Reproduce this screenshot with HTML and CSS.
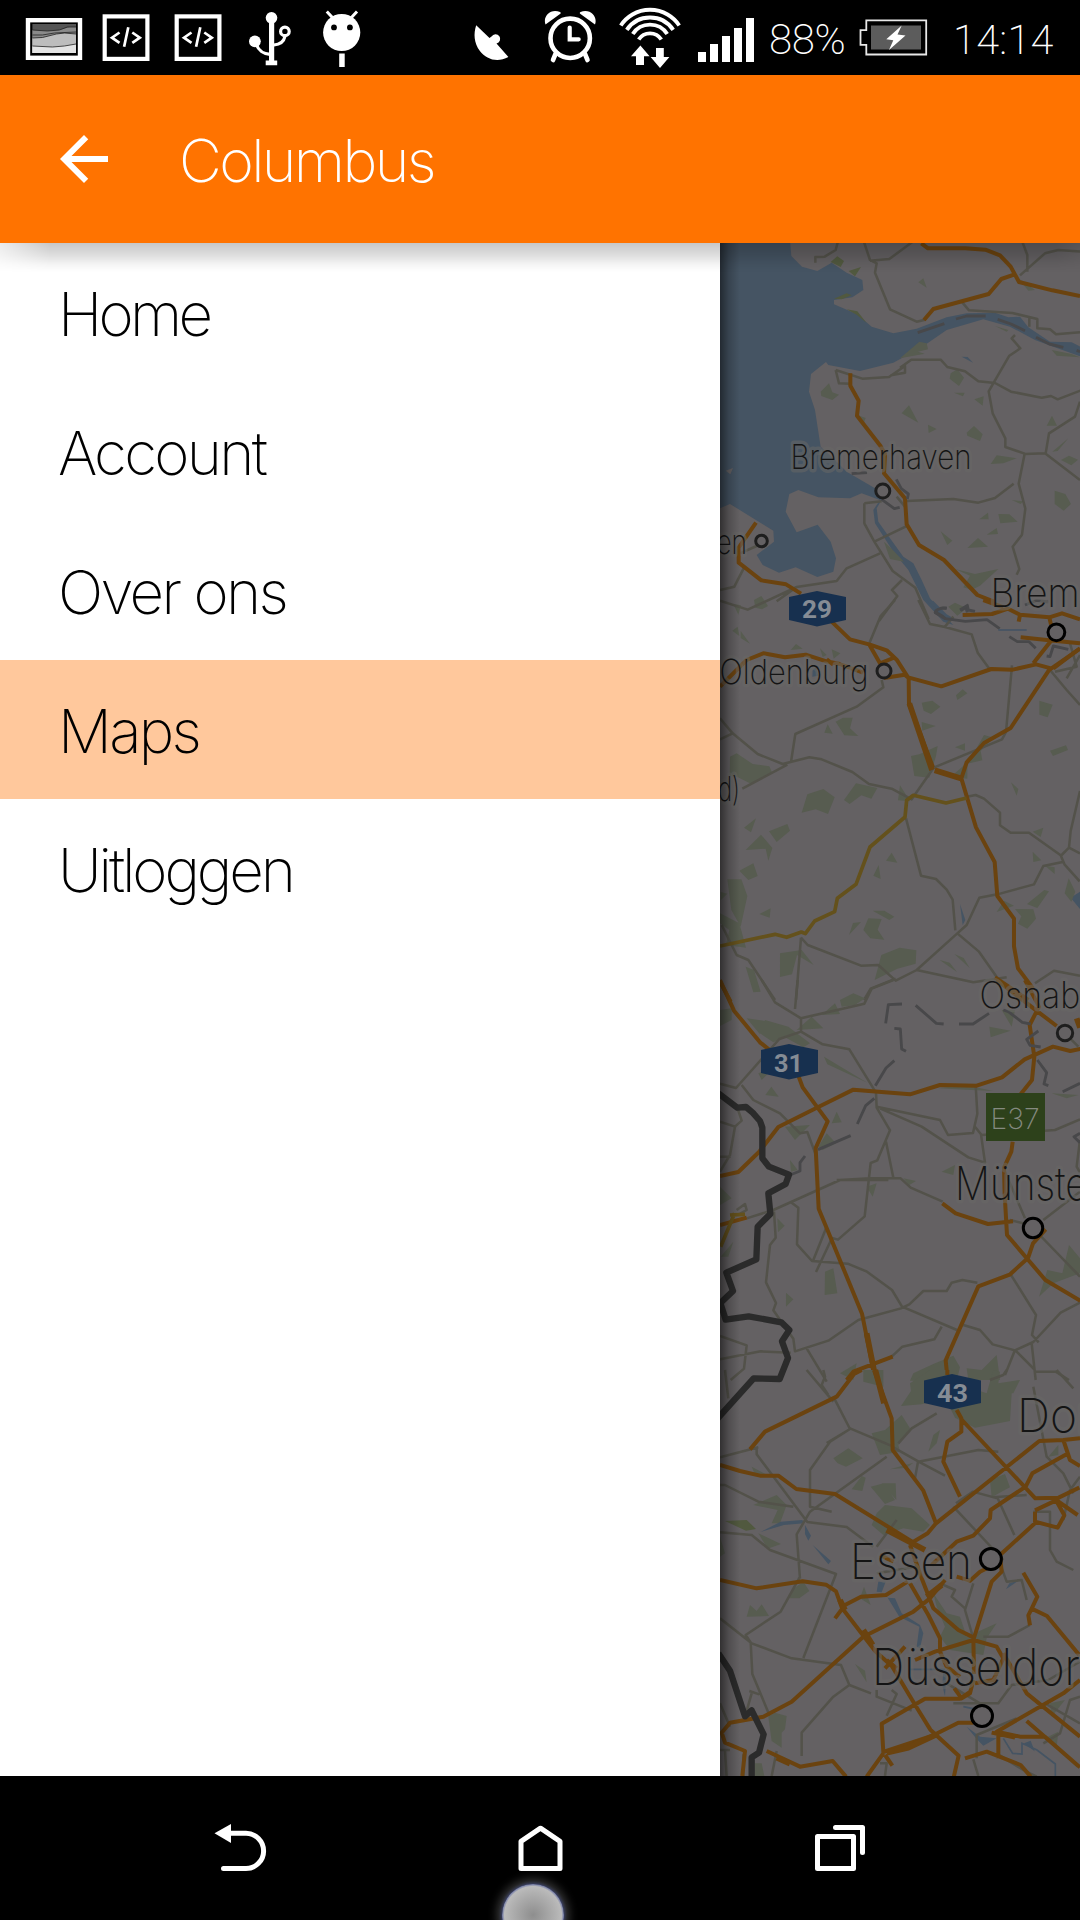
FILE: index.html
```html
<!DOCTYPE html>
<html lang="nl">
<head>
<meta charset="utf-8">
<title>Columbus</title>
<link rel="stylesheet" href="styles.css">
</head>
<body>
<div class="phone">
  <div class="status">
    <svg class="ic-picture" width="58" height="75" viewBox="25 0 58 75">
      <rect x="28" y="20.2" width="52" height="37.6" fill="#000" stroke="#fff" stroke-width="4.4"/>
      <rect x="32.4" y="24" width="43.6" height="29" fill="#555"/>
      <path d="M32.4 30l15 1 12-1 10-3h6.600V53H32.400z" fill="#8a8a8a"/>
      <path d="M32.400 38l9 0 14-4 10-1 10.600 1V53H32.400z" fill="#bdbdbd"/>
      <path d="M32.400 46l20 1 12-1 11.600-2V53H32.400z" fill="#e4e4e4"/>
      <path d="M32.400 30l15 1 12-1 8-3 8.600 0M32.400 35l10 0 12-2 21.600-1M32.400 38l10-.500 14-3.500 8-1 11.600 1M32.400 46l20 1 12-1 11.600-2" fill="none" stroke="#222" stroke-width=".8"/>
    </svg>
    <svg class="ic-code" width="48" height="75" viewBox="102 0 48 75">
      <rect x="104.700" y="16.400" width="42.700" height="42.500" fill="none" stroke="#fff" stroke-width="4.200"/>
      <path d="M119.500 32.500l-7.500 5.200 7.500 5.200M132.300 32.500l7.500 5.200-7.500 5.200M128.300 27.300l-4.200 19.400" fill="none" stroke="#fff" stroke-width="2.700"/>
    </svg>
    <svg class="ic-code" width="48" height="75" viewBox="102 0 48 75">
      <rect x="104.700" y="16.400" width="42.700" height="42.500" fill="none" stroke="#fff" stroke-width="4.200"/>
      <path d="M119.500 32.500l-7.500 5.200 7.500 5.200M132.300 32.500l7.500 5.200-7.500 5.200M128.300 27.300l-4.200 19.400" fill="none" stroke="#fff" stroke-width="2.700"/>
    </svg>
    <svg class="ic-usb" width="44" height="75" viewBox="248 0 44 75">
      <path d="M269 18h5.200v42.500h3v4.700h-11.500v-4.700h3.300z" fill="#fff"/>
      <circle cx="271.500" cy="17.800" r="5.800" fill="#fff"/>
      <circle cx="254.900" cy="41.300" r="5.900" fill="#fff"/>
      <circle cx="284.900" cy="31.400" r="4.300" fill="none" stroke="#fff" stroke-width="3.200"/>
      <path d="M256.500 45c2 5 7 9 13.500 9.300M284.900 36.500c-1 5-5.500 8-11 8.500" fill="none" stroke="#fff" stroke-width="3.200"/>
    </svg>
    <svg class="ic-droid" width="40" height="75" viewBox="322 0 40 75">
      <circle cx="341.700" cy="32.500" r="18.600" fill="#fff"/>
      <path d="M326.800 11.500l6.500 7M357 11.500l-6.500 7" stroke="#fff" stroke-width="3"/>
      <circle cx="334" cy="27.400" r="2.900"/><circle cx="349.900" cy="27.400" r="2.900"/>
      <rect x="339.200" y="53.500" width="5.500" height="13.500" fill="#fff"/>
    </svg>
    <svg class="ic-dish" width="36" height="75" viewBox="473 0 36 75">
      <path d="M476.200 25.300L489.500 38l2-1.500a4.700 4.700 0 1 1 5 7L508.400 57c-11 6-22 2.500-28.500-6-6-8-6.500-17-3.700-25.700z" fill="#fff"/>
    </svg>
    <svg class="ic-alarm" width="54" height="75" viewBox="543 0 54 75">
      <g fill="none" stroke="#fff" stroke-width="4.600" stroke-linecap="round">
        <circle cx="570.200" cy="38.300" r="19.700"/>
        <path d="M555.500 54l-2.500 6M585 54l2.500 6"/>
        <path d="M569.700 27.500v11.800h9" stroke-width="4.200"/>
      </g>
      <path d="M545.500 24.500c-3-8 5-16.500 14.500-12.500 1 .5 1 1.500 0 2z" fill="#fff"/>
      <path d="M595 24.500c3-8-5-16.500-14.500-12.500-1 .5-1 1.500 0 2z" fill="#fff"/>
    </svg>
    <svg class="ic-wifi" width="64" height="75" viewBox="618 0 64 75">
      <g fill="none" stroke="#fff" stroke-width="3.900">
        <path d="M620.800 25.500a35 35 0 0 1 58.400 0"/><path d="M626.800 29.800a28 28 0 0 1 46.400 0"/>
        <path d="M632.800 34a20.500 20.500 0 0 1 34.400 0"/><path d="M638.700 39.500a13.500 13.500 0 0 1 22.600 0"/>
      </g>
      <path d="M640.400 45.500l9.200 10.700H644V65h-8v-8.800h-5zM656 48h7.800v9h5.600L660 68l-9.400-11h5.400z" fill="#fff"/>
    </svg>
    <svg class="ic-signal" width="56" height="75" viewBox="698 0 56 75">
      <path d="M698 52h8v10h-8zM710 44h8v18h-8zM722 36h8v26h-8zM734 28h8v34h-8zM746 18h8v44h-8z" fill="#fff"/>
    </svg>
    <span class="percent">88%</span>
    <svg class="ic-battery" width="69" height="75" viewBox="859 0 69 75">
      <path d="M866.300 20.300h59.900v34.200h-59.900v-9.700h-5.800V30.200h5.800z" fill="none" stroke="#e8e8e8" stroke-width="1.800"/>
      <rect x="871" y="25.500" width="50" height="24" fill="#5c5c5c"/>
      <path d="M901.700 25.500l-15.400 13.700 7 1-4.300 9.800 16.500-14.500-8-1z" fill="#fff"/>
    </svg>
    <span class="clock">14:14</span>
  </div>

  <header class="appbar">
    <svg class="back" width="72" height="72" viewBox="0 0 24 24"><path d="M20 11H7.830l5.590-5.590L12 4l-8 8 8 8 1.410-1.410L7.830 13H20v-2z" fill="#fff"/></svg>
    <h1 class="title">Columbus</h1>
  </header>

  <main class="content">
    <nav class="drawer">
      <a class="item"><span class="tighter">Home</span></a>
      <a class="item"><span>Account</span></a>
      <a class="item"><span>Over ons</span></a>
      <a class="item active"><span>Maps</span></a>
      <a class="item"><span class="tight">Uitloggen</span></a>
    </nav>
    <div class="mapwrap">
    <svg class="map" width="360" height="1533" viewBox="720 243 360 1533">
      <rect x="720" y="243" width="360" height="1533" fill="#646163"/>

      <!-- North Sea coast and Bremen -->
      <g transform="translate(700 240) scale(.333333)">
        <path class="water" d="M0 0H270L274 48 306 80 352 93 395 68 440 98 487 120 490 150 457 172 402 180 402 193 470 222 515 260 580 280 650 266 740 232 800 220 885 218 925 232 960 230 985 262 1050 305 1115 307 1150 325V352L1060 320 1005 300 930 260 850 238 740 270 665 322 580 368 480 393 385 375 378 366 333 402 327 455 345 510 362 620 395 650 440 695 525 745 548 775 530 805 535 845 570 895 610 950 640 970 665 1020 690 1075 740 1135 760 1155 730 1145 670 1080 625 990 580 935 525 850 520 810 540 780 485 760 450 775 355 772 295 750 268 762 257 815 290 877 353 854 392 905 408 955 400 995 352 1011 287 982 237 998 188 975 170 945 222 905 220 872 90 792 0 830z"/>
        <path class="water" d="M785 350l18 1 16 17z"/>
        <path class="land" d="M77 692l22-8-8 19z"/>
        <path class="green bright" d="M392 66l20-17 20 14-10 18zM446 93l37-12-18 28zM402 176l38-16 15 6-30 12zM440 208l32 6 28 35-30-25z"/>
        <path class="green" d="M655 127l15-12 10 28zM600 355l58-50 22 5 4 18-30 7 20 6zM752 400l20-12 20 25-15 25-28-22zM362 455l25-25 10 27 20 7-20 16-33-12zM762 458h32l-5 11zM823 478l28-9-3 28zM605 520l22-24 28 52zM684 554l26 13-24 12zM800 578l22-20 26 25-8 20-38-16zM872 672l18-26 60 9-40 15zM1040 557l16-30 15 30zM1057 635l48-40-32 38zM1083 660l24-13 27 12-20 17zM1064 752l32 10 17 30-22 20-27-20zM895 822l33 1 25 22-52 5zM838 838l26-20 2 20zM860 884l30-20 4 18zM802 924l32-30 30 26zM722 874l35 28-15 13zM552 905l26 24 34 36-42-8zM790 1042l20-35-45-20 60 15 70-15-55 50-25 12zM470 524l27 10-8 20zM162 1080l22-12 20 30-18 10-20-5zM100 1092l23 4-8 28zM745 1100l20-12 35 17-28 22zM885 258l40 12-5 5zM955 115l50 35-20 2zM1055 330l60 12 25 10-70-5zM935 780l35 4-8 8z"/>
        <path class="road" d="M346 68V51l28-1 33-20 8-30M490 0l20 60 20 10-5 28 45 110 80 37 25-6M510 62l58-5L645 0M965 0l17 45v50M960 106l75-66 40-10 70 5M785 185l22 26 130 8 75 18v28l38 3 18 15 72-6M988 235v25M945 285l-10 10 26 30-33 22-62 107 12 66 38 75v26l58 20-18 90 20 75-10 78-28 36 20 67-8 17M975 642l60-2 105 80M1037 640l10-60 78-50 15-45M600 383l34-24 88 0 20 22 53 13 40 30 50 5 48 26 92 18 28-5 20 10 70-27M407 390l80 26 80-5 48-33v20l-43 8M407 390l10 40 33 1M620 783l140-6 75 11 50-14 56-43M493 790l52-6M493 790v60l30 55 100-48M523 905l55 88 68 50 40 95M540 940l-100 45-30 38-120 18-147 68L60 1082M60 1050l43-10 28-55M290 1041l-60 43M606 1020l-30 30 16 18-55 75M120 940l50-22M590 770l25 30"/>
        <path class="orange" d="M664 10l20 15h112l60 4 44 17 32 34 25 46 100 25 83 17M942 104l-38 13-38 45-166 45-28 33M451 400v37l25 45-5 45 70 90 14 25-3 58 63 75 5 78 37 62 75 45 100 105 50 20M168 848l-52 75v45l68 53 74 12 45 28"/>
        <path class="rail" d="M653 278l80-27M768 237l32-9h57M893 238l40 14 42 20M1008 292l40 20 42 10M1130 331l10 4"/>
        <path class="rail" d="M455 701l46-3M589 718l15 28 21 16-3 15M545 778l38 28 16-4M740 1105c-20-5-28 4-34 12l40 20M782 1112l15-10 5 15M975 1095l35-14 35 5"/>
      </g>

      <!-- Oldenburg to Osnabrück -->
      <g transform="translate(700 600) scale(.333333)">
        <path class="water" d="M680 0l20 3 40 40 30 18-22 0-40-35zM1112 893l28-18v52zM780 912l16 48-8 15zM338 210l10-8 7 25-18 3z"/>
        <path class="green" d="M97 92l16-12 5 28zM122 93l28 38-28-17zM272 150l16-18 20 14zM360 145l20 20-12 6zM395 148l26 12-20 16zM665 308l32-6 24 18-28 22-22-10zM665 366l42 12-40 14zM633 468l25-5 55-25-5 30-20 65-45-5zM765 442l30-12v22zM768 286l20-18 14 12-30 20zM810 480l42-75 30 8-40 40 5 28-45 10v45l-50-5zM1018 302l40 12-15 38-25-8zM1050 452l48-16 6 14-45 18zM90 470l20-10 48 32 50 7 8 18-62 35-40-20-25-5zM407 365l22-12h29l-8 32 25 23-42-2zM373 398l10-25 15 28zM432 600l36-50 64 14-18 32-30-10-35 26zM305 638l17-55 48-16 34 25-20 50-37-14zM600 556l30 48-36-3zM933 547l22 20-5 20zM132 683l36-28-15 42zM207 694l55-22 8 20-40 34zM137 750l46-46 34 40-12 38-8-36zM118 812l42-22 13 38-28 12zM82 838h42l18 50-20 92-28-50zM62 876l20 5-20 20zM178 942l34-17-3 28zM60 940l58 30 20 73-60-8 10-45-28-20zM240 1060l65-10 36 45-50-30-15 58-36 8zM137 1100l25 10 20 65-22 2zM520 827l16-32 6 42zM558 782l17-24 17 30zM518 932l35 0 30 18-15 10zM447 1005l12-36 24-3zM490 990l15-35 40 2-12 32 20 30-42-4zM524 1140l20-75 55-22 50 8-2 40-55 15zM719 1080l30 8 22 28zM763 1062l28 12 18 30zM981 912l52-42 14 4-35 50zM945 927l55 1 8 28-26 30-28-15 10-22zM890 936l22-34 30 15zM998 755l26 26-24 5zM998 695l32-12-8 28zM1035 797l29 5v20zM1094 880l12-45 20 40-12 30z"/>
        <path class="road" d="M585 0l-43 48-34 82M655 0l35 72 45 9 80 22 18 55 35 48M735 80l25-30M545 240l5 22-80 58-184 82-13 84M60 355l38 45 75 62 75 30 80-20 37 6 92 38 50 36 68 14 60 32 66-95 205-85 12-22 18-200M98 400l-38 18M262 494l-90 48-45 24M618 655l45 172 45 10 32 32 18 30 8 92M772 1000l28-25 38-82 54-10 110-30 28-55 58-12M800 590l27-5 25 11 48 42v38l32 22 55 0 95 68 12 28 45 50M1085 765l22-22 5-50 28-120M1107 743l33 17M65 975l45 90 35 15 80 120M303 1013l-15 187M303 1013l20 22 160 62 52-2 52 47 63-32 122-110 65 55 70 100M650 1110l170 37 100 -15M1005 1150l57-38 78 15M587 1136l-75 30-20 34M1050 210l50 60 40 45M1110 130l20 70-65 15M1140 165l-40 70"/>
        <path class="orange" d="M60 260l80-80 50-20 65 12 62-8 62 20 40 8 70 26M380 178l20 16M395 65l55 53 60 16 50 17 30 28 36 56 1 77 72 190M508 134l32 56 40-16M552 234l62-10 10 8 100 27 150-52 64 2 70-16 45 12M1050 208l90-62M1050 206l-118 178-80 45-52 58-16 48 44 147 56 104 8 102 50 68v83l12 66 45 60M788 45l88-3 48-16 36 18 88 8 38-12 54 18M1055 120l-55 70M962 112l100 10 78 8M956 65l4-20M1048 52l5 22M850 0l60 22M885 1132l100 68"/>
        <path class="orange thick" d="M628 310l68 200M704 511l82 25"/>
        <path class="yellow" d="M60 1038l165-35 35 9 44-16 12 5 28-38 60-28 8-40 56-42 42-112 105-90 5-50 20-15 98 23 62-15"/>
        <path class="orange" d="M1140 145l-80 60M60 1145l32 60"/>
        <path class="rail" d="M740 24c-25 0-35 8-34 14l30 18 60 8 65-5 38 27M780 30l22-14 3 14 20 4M928 110l24 15h35l20 20M1040 168l10 2 10-32 45 10"/>
        <path class="thinwater" d="M895 90h85"/>
      </g>

      <!-- Münsterland -->
      <g transform="translate(700 980) scale(.333333)">
        <path class="green" d="M60 90l35-5v35l-35 18zM140 115l55 8-15 40zM180 160l15-40 70 20 65 50-20 12-55-30-35 15zM290 150l45-40 35 35zM365 105l40-35 15 32zM420 60l40-20 35 15-30 20-40 5zM372 230l130 78-120-55zM196 345l18-25 22 30zM395 430l15-35 15 32zM255 440l75-5-45 45zM355 500l25-40 28 30-40 20zM868 140l64 12-60 20zM905 90h40l-10 50zM715 325l80-10 85 18-80-4zM270 540l23 30-20 5zM500 620l30-10-12 40zM725 575l40-20-5 30zM60 620l35 35-35 20zM232 715l22 22-20 20zM62 830l38-45-15 45zM610 595l38 8-20 12zM375 875l25-10 12 75-38 5zM258 938l22 20-22 22zM1017 950l25-80 45 10 20-85 33 40v45l-80 30zM175 280l50-20-40 40zM640 1180l60-28 60-25 20 35-10 40H630zM800 1165l45 5 45-45 10 75H805zM1055 340l80 5-35 10zM420 1180l50-30-10 50z"/>
        <path class="road" d="M185 0l40 67 78 48 190-44 22-45 65-26M285 87l8-87M303 115v40l65 38 80 15 80 130 2 45 40 68-38 90-20 8-18 160-80 70-18-5-48 102M303 155l-65 22-130 147-48-13M125 315l35 45 80 40 60 60 22-4 26 70M530 380l190 40 24 45 75-6 13-58-5-85M540 385l125 55 140 92 50 16-12-85-20-25M845 465l220-15 75-32M558 485l22 108M60 425l45 15 20-18-15-45M105 440l-15 85-30 50M60 530l32 0M140 715l80-25 200-90 90-5 92 0 30 28 96 42M222 695l5 78-17 22-12 112 30 62-8 22 60 85 5 38 100-32 90-62 128-35 25-12 42-40h70l15-25 32-8 45 8M275 668l20 15-4 110 45 50 107 8 58 24 75 55 30 50 165 70M340 840l40-100M790 1035l50 15 38 43 67 18 55-25 82-88 58-30M930 880l78 125-12 60 20 22M945 1110l-30 75M945 1110l60 60M995 1090l12 110M575 1130l32-30 96-22 22-38M320 1105l60 100M60 1068l80 28-8 70-40 34M60 1138l122-24 90 4M930 720l60 15 150 155M1030 720l110-85M915 575l60 140M110 690l25-18 5 18-22 12M1140 480l-10 80 10 18M1005 1175l62 0 40 25M1135 200l-30-30M410 600h155"/>
        <path class="orange" d="M60 0l42 92 78 95 40 32M296 290l12 32 75 102-36 80 9 182 130 315 40 199M60 588l55-12 62-60 58-75 120-60 105-52 170 14 90-28 110 2 76-25 68-54 85-38 52 13 30-6M890 0l130 100 50 38M975 0l42 80-28 55 14 95-7 70-36 45M938 485l-4 30-22 48 2 80 7 122 115 135 105 62M727 670l40 30 97 32 75-8M1037 748l-38 42-15 44-55 50-94 35-98 222 6 59M440 1200l20-25 118-45M60 735l80-22"/>
        <path class="orange thick" d="M500 1060l28 140M1130 115l10 28"/>
        <path class="yellow" d="M62 800l42-100M90 705l45-2"/>
        <path class="rail" d="M557 130l8-56 41-2M583 145l18 2 4 60 13 7M647 76l62 54 22 2M777 132h42l48-32M910 90l15 5 42 32 25 5M1015 153l-35 25 10 18 32 5M1012 240l28 38-8 34 13 5M1088 335l52-25M583 242l-25 22-32 53M523 355l-26 22-25 55M452 467l-98 42M315 528l-15 20v25l-30 12M1140 460l-18 10 18 18"/>
        <path class="border" d="M55 340l57 43 26-2 20 17 22 25 7 20v92l20 25 60 24-10 28-52 28 6 62-38 38-4 98-90 40 20 55-38 36 16 50 69-10 98 18 24 23-22 34 18 50-25 63-78-2-110 122"/>
      </g>

      <!-- Ruhr area -->
      <g transform="translate(700 1370) scale(.333333)">
        <path class="green" d="M630 40l60-40h80v40l90 30 20-70 20 5-5 35 65-10-20 40-5 0-5 83-105 20-60-30-30-60-70 20-62 5 30-45zM490 0h60v50l-60-15zM515 190l40-10 50-45 25 40-35 50 5 20-60 10zM400 265l45-30 43 30-50 25-25-10zM512 350l40-10 33 50-30 12zM545 340h42l2 50zM530 430l25-25 80 10 55 50-20 20-60-10-60 20-35-30zM870 330l45-18 15 40-20 10-35 20zM685 245l15-50 20-15-10 40zM455 358l30-40 12 5-10 40zM160 405l70-30 30 30-20 55-25 0 18-40zM175 490l68 32-40 14zM60 500l15 50-15 10zM140 740l10-35 20 18 15-20 22 35zM275 660l35-25 18 28-30 22-30 0zM700 670l40 60 40 10 20 60 90-40-30 45-10 50-100-15-30-40 15-30-25-60zM465 882l30 20 5 35zM205 1040l20-12 35 10-5 40-10 10v45l-30-20zM165 1180l20 0 8 38h-30zM480 685l12-35 20 55zM570 298l70-20-20 15zM1045 260l30-35v30zM1035 1105l40-20-5 45zM1050 1000l45-10-40 50zM155 290l60 32-50-8z"/>
        <path class="green bright" d="M75 453l65-3 28 27-30 5z"/>
        <path class="water" d="M182 486l60-31 65-5 5 10-60 5zM315 465l18 32-8 15-10-20zM338 525l55 48-8 10zM563 683l22 2 20 45 55 35 10 25-10 45-10-5 8-60-60-30zM530 665l5-30 22 0-12 32zM918 658l10-18 28-8zM800 1070l40 30 50 5-40 22-20-20zM972 1120l20-8 12 32zM730 900l10 0-5 78-8-30z"/>
        <path class="thinwater" d="M910 1105l28 45 28 2v-32l45 20 55 42v38M630 898h105M790 1010l40 8"/>
        <path class="road" d="M370 0l5 20-10 25 20 30M450 175l130 55M400 80l50 97-60 38-60 85v110l65 15M450 177l-70 42M580 232l80 45 75 40M655 270l-10 55M655 275l180-35 60 5M595 220l40-45 75-45M560 260l-230 165-40 68 10 133M170 235v18l152 203 118 15 80 60M60 345h15l100 50 105 15M60 487l95 8 55 45 198 72-98 252M300 620l-58 105-105 70 15 22 5 95 52 125M60 745l95 75 120 45 148 20 25 60-48 35-95 108v70M60 1000l30 70M155 970l-20 70M148 963l30 10M448 945l65 25M530 960v20l105 42M575 960l15 12-30 65M320 0l80 95M75 0l10 85M60 262l115-30M530 610l120-20M760 410l150 160M768 400l50-35 75 20 50 110M880 382l100-7M900 580l20 55 45-5 15 60M1000 425h50v115l20 35 50 25M1000 50l40 210 50 50 30 60M920 0l-10 15-40 15M1070 0l50 55M720 640l45 20-10 20 40 35M820 640l-25 80 22 75M850 800h75l65-35M830 1165v-70l120-50M820 1168l15 50M760 1000h135l40-55 110-15 95-55M1140 980l-30 10-30 100-50 30M890 1150l80 50 40 20M1035 1000l105 60M215 1218l15-75M80 1218l-5-75M540 1180h20l-5 38M740 940l100 60M130 1218v-65M60 1140l30 0M1140 320l-30 40-20 90M530 530l60-80"/>
        <path class="orange" d="M485 0l-23 12-52 68-215 105-45 53M60 285l60 18 60 14h55l54 40 116 15 240 148M522 0l53 145 3 95 92 122 38 98-25 30-45 27M1140 205l-50 5-72 3L708 460M742 0v15M770 120l14 25v40l-42 30-12 60 50 105M786 150l220 235 70-2 62-30M1090 210l20 60 30 18M1005 425v30l68 18 20-37-25-45-63 30M1068 390l65 45M1105 250l-108 60-20 40-105 70-2 25-50 52-50 18-75 70M1010 455l-110 100 5 50-30 30-55 175M60 630l110 25 138-21 70 10 30 20 18 50 100 130 50 45 75 125 40 65 85 78-15 65M795 1165l65-20 102 40 30 35M405 745l30-40 48-25 75-5 65-40M690 685l-50 40-150 75-215 195-85 45-100 18-25 30 10 30 60 25-8 75M630 525l35 100 35 90 75 65 45 22 2 110M820 930l-10 40-25 15-22-30M630 640l55 95 35 70v40l20 45 40 30M645 870l60-25 115-35 70 20 20 35-30 65-55 10M910 850l70 120 160 130M615 830l-60 65M560 870l30 25M970 608l42 72-17 36 46 22 99 120M995 716l-10 20 5 30M1140 930l-50 40-200 115 70 15h75l105 92M980 1053l155 135M895 1090v75M875 1088l70 15M820 1058h-45l-75 38-150 50-5-85 130-75h105l30-20M550 1150l-50 70M555 1155l22 32M200 1143l100 47 98-17 40 47M540 555l40 20M770 620l40 12 30-27 30-15M690 685l45-55"/>
        <path class="orange thick" d="M526 0l26 100M560 480l115 60M420 690l15 30M490 780l28 45M560 1148l65-15 85-40M230 1163l40 18M680 680l45-35"/>
        <path class="border" d="M55 850l35 52 45 137 20-18 36 72-14 55-22 14v58"/>
      </g>

      <g class="dots">
        <g class="black"><circle cx="1033" cy="1228" r="9.700"/><circle cx="990.900" cy="1559" r="10.500"/><circle cx="982" cy="1716" r="10.500"/><circle cx="1056.400" cy="632.300" r="8.400"/></g>
        <g class="dark"><circle cx="882.800" cy="491" r="7"/><circle cx="884" cy="671" r="7"/><circle cx="1065" cy="1033" r="7.700"/><circle cx="761.500" cy="541" r="5.800"/></g>
      </g>

      <g class="shield">
        <path d="M789 597l28-6 29 6v23l-29 6.500-28-6.500z"/>
        <path d="M761 1050l28-6 29 6v23l-29 6.500-28-6.500z"/>
        <path d="M924 1380.500l28-6.500 29 6.500v22.500l-29 6.500-28-6.500z"/>
      </g>
      <rect x="986" y="1093" width="59" height="48" fill="#2d411b"/>
      <g class="num">
        <text x="802" y="618" textLength="30" lengthAdjust="spacingAndGlyphs">29</text>
        <text x="774" y="1071.500" textLength="29" lengthAdjust="spacingAndGlyphs">31</text>
        <text x="937" y="1401.500" textLength="31" lengthAdjust="spacingAndGlyphs">43</text>
      </g>
      <text class="e37" x="990.500" y="1128.500" textLength="49" lengthAdjust="spacingAndGlyphs">E37</text>
      <g class="city">
        <text x="790.500" y="469" font-size="33.500" textLength="181" lengthAdjust="spacingAndGlyphs">Bremerhaven</text>
        <text x="716.500" y="554" font-size="33.500" textLength="30.500" lengthAdjust="spacingAndGlyphs">en</text>
        <text x="990.500" y="607" font-size="40" textLength="132" lengthAdjust="spacingAndGlyphs">Bremen</text>
        <text x="719.500" y="684" font-size="34.500" textLength="149" lengthAdjust="spacingAndGlyphs">Oldenburg</text>
        <text x="718" y="800.500" font-size="33.500" textLength="22" lengthAdjust="spacingAndGlyphs">d)</text>
        <text x="979.500" y="1008" font-size="36.500" textLength="168" lengthAdjust="spacingAndGlyphs">Osnabrück</text>
        <text x="955" y="1200" font-size="46" textLength="146" lengthAdjust="spacingAndGlyphs">Münster</text>
        <text x="1017" y="1432" font-size="47" textLength="210" lengthAdjust="spacingAndGlyphs">Dortmund</text>
        <text x="850" y="1579" font-size="49" textLength="122" lengthAdjust="spacingAndGlyphs">Essen</text>
        <text x="872" y="1684.500" font-size="50" textLength="223" lengthAdjust="spacingAndGlyphs">Düsseldorf</text>
      </g>
    </svg>
    </div>
    <div class="bar-shadow"></div>
  </main>

  <footer class="navbar">
    <svg width="54" height="144" viewBox="213 1776 54 144">
      <path d="M214.500 1833.300L231 1824v19z" fill="#fff"/>
      <path d="M230 1833.300h16a17.500 17.500 0 0 1 0 35.200h-22.500" fill="none" stroke="#fff" stroke-width="5" stroke-linecap="round"/>
    </svg>
    <svg width="46" height="144" viewBox="517.500 1776 46 144">
      <path d="M520.500 1841.300L540 1828.200l19.500 13.100v27.200h-39z" fill="none" stroke="#fff" stroke-width="5" stroke-linejoin="round"/>
    </svg>
    <svg width="52" height="144" viewBox="814 1776 52 144">
      <path d="M817.500 1836.500h36v32h-36zM835.500 1827.500h27v25" fill="none" stroke="#fff" stroke-width="5" stroke-linejoin="round" stroke-linecap="round"/>
    </svg>
    <div class="touch"></div>
  </footer>
</div>
</body>
</html>
```
FILE: styles.css
```css
* { box-sizing: border-box; }
body { margin: 0; background: #000; }
svg { display: block; flex: none; }
.phone {
  width: 1080px;
  height: 1920px;
  display: flex;
  flex-direction: column;
  overflow: hidden;
  font-family: Inter, "Liberation Sans", sans-serif;
  font-weight: 200;
}

/* status bar */
.status {
  height: 75px;
  flex: none;
  display: flex;
  align-items: center;
  padding-left: 25px;
  background: #000;
  color: #fff;
  font-family: Roboto, sans-serif;
  font-weight: 200;
  white-space: nowrap;
}
.ic-code { margin-left: 19px; }
.ic-code + .ic-code { margin-left: 24px; }
.ic-usb { margin-left: 26px; }
.ic-droid { margin-left: 30px; }
.ic-dish { margin-left: 111px; }
.ic-alarm { margin-left: 34px; }
.ic-wifi { margin-left: 21px; }
.ic-signal { margin-left: 16px; }
.percent { width: 105px; padding: 4px 0 0 15px; font-size: 42px; line-height: 71px; letter-spacing: -.4px; }
.clock { padding: 4px 0 0 25px; font-size: 41.500px; line-height: 71px; letter-spacing: .3px; }

/* app bar */
.appbar {
  height: 168px;
  flex: none;
  display: flex;
  align-items: center;
  padding-left: 48px;
  background: #ff7300;
  color: #fff;
}
.title {
  margin: 0 0 0 59px;
  font-size: 59px;
  font-weight: 200;
  line-height: 72px;
  letter-spacing: -2.6px;
  padding-top: 3px;
}

/* drawer and map */
.content {
  position: relative;
  height: 1533px;
  flex: none;
  display: flex;
}
.drawer {
  width: 720px;
  flex: none;
  background: #fff;
}
.item {
  height: 139px;
  display: flex;
  align-items: center;
  padding: 3px 0 0 58px;
  font-size: 60px;
  letter-spacing: -2.7px;
  color: #000;
}
.item .tight { letter-spacing: -3.1px; }
.item .tighter { letter-spacing: -3.7px; }
.item.active { background: #ffc89c; }
.mapwrap { position: relative; width: 360px; }
.mapwrap::after {
  content: "";
  position: absolute;
  inset: 0 auto 0 0;
  width: 20px;
  background: linear-gradient(90deg, rgba(0,0,0,.5), rgba(0,0,0,.2) 45%, transparent);
}
.bar-shadow {
  position: absolute;
  inset: 0 0 auto 0;
  height: 29px;
  background: linear-gradient(rgba(0,0,0,.22), rgba(0,0,0,.12) 45%, rgba(0,0,0,.04) 75%, transparent);
  -webkit-mask-image: linear-gradient(90deg, rgba(0,0,0,.35), #000 50px, #000 1056px, rgba(0,0,0,.6));
  mask-image: linear-gradient(90deg, rgba(0,0,0,.35), #000 50px, #000 1056px, rgba(0,0,0,.6));
}

.water { fill: #455463; }
.thinwater { fill: none; stroke: #455463; stroke-width: 5; }
.land { fill: #646163; }
.green { fill: #575c50; }
.green.bright { fill: #51593f; }
.road, .orange, .yellow, .rail, .border { fill: none; stroke-linejoin: round; }
.road { stroke: #53524a; stroke-width: 7.5; }
.orange { stroke: #6b430f; stroke-width: 12; }
.orange.thick { stroke-width: 17; }
.yellow { stroke: #64511c; stroke-width: 11; }
.rail { stroke: #48484a; stroke-width: 8.5; }
.border { stroke: #2b2b2b; stroke-width: 19; }
.dots circle { fill: #646163; }
.dots .black { stroke: #000; stroke-width: 3; }
.dots .dark { stroke: #1e1e1e; stroke-width: 3; }
.shield { fill: #17304f; }
.num { fill: #858c95; font: 700 26.500px Roboto, sans-serif; }
.e37 { fill: #858a80; font-size: 29px; font-weight: 200; }
.city text {
  fill: #141414;
  stroke: rgba(104, 104, 102, .55);
  stroke-width: 7px;
  stroke-linejoin: round;
  paint-order: stroke;
}

/* navigation bar */
.navbar {
  position: relative;
  height: 144px;
  flex: none;
  display: flex;
  justify-content: space-between;
  padding: 0 214px 0 213px;
  background: #000;
  overflow: hidden;
}
.touch {
  position: absolute;
  left: 502px;
  top: 108px;
  width: 62px;
  height: 62px;
  border-radius: 50%;
  background: radial-gradient(closest-side, #8e8e8e, #b2b2b2 75%, #bbb 92%, #6b74a4);
  box-shadow: 0 0 3px 1px #39406a, 0 0 10px 5px #3a3a3a;
}
```
